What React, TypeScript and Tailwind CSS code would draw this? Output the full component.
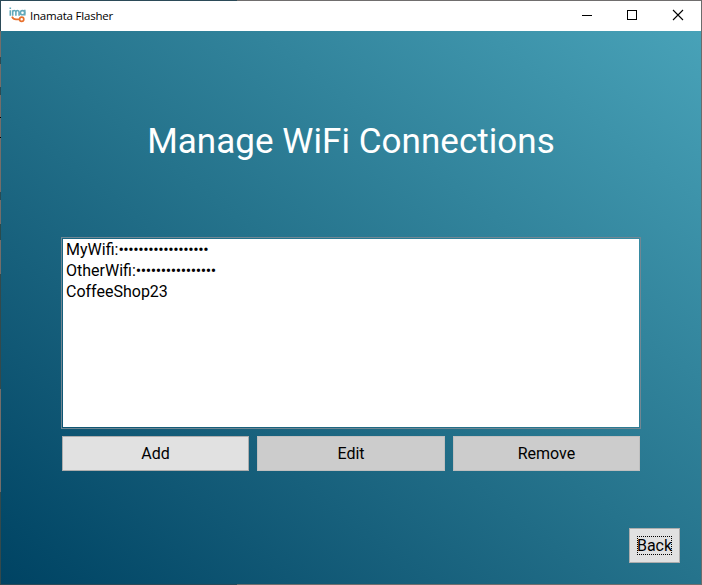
import React from "react";

const networks = [
  { name: "MyWifi:", mask: "••••••••••••••••••" },
  { name: "OtherWifi:", mask: "••••••••••••••••" },
  { name: "CoffeeShop23", mask: "" },
];

const leftEdge: [number, string][] = [
  [57, "bg-[#756d69]"],
  [7, "bg-[#2b4a52]"],
  [23, "bg-[#756d69]"],
  [8, "bg-[#2b4a52]"],
  [22, "bg-[#756d69]"],
  [1, "bg-black"],
  [19, "bg-[#756d69]"],
  [1, "bg-black"],
  [54, "bg-[#756d69]"],
  [8, "bg-[#2b4a52]"],
  [24, "bg-[#756d69]"],
  [16, "bg-[#2b4a4c]"],
  [34, "bg-[#756d69]"],
  [115, "bg-[#34494b]"],
  [103, "bg-[#756d69]"],
  [93, "bg-[#34494b]"],
];

function Logo() {
  return (
    <svg width="18" height="18" viewBox="0 0 18 18" fill="none" className="shrink-0">
      <g stroke="#62a9bb" strokeWidth="1.6">
        <path d="M1.3 3.2V8.8M1.3 .5v1.5" />
        <path d="M3.7 8.8V3.2M3.7 5Q3.9 3.5 5.3 3.5Q6.9 3.5 6.9 5.2V8.8M6.9 5.2Q7 3.5 8.5 3.5Q10.1 3.5 10.1 5.2V8.8" />
        <circle cx="13.5" cy="5.7" r="2.1" />
        <path d="M15.8 2.8V8.6" />
      </g>
      <path d="M3 9.6Q4.2 12.3 7 12.4H10.5" stroke="#e8702c" strokeWidth="1.7" />
      <circle cx="12.7" cy="12.2" r="2.1" stroke="#e8702c" strokeWidth="1.7" />
    </svg>
  );
}

function TitleBar() {
  return (
    <header className="flex h-[30px] items-center bg-white pl-2 text-black">
      <Logo />
      <span className="ml-[3px] w-[84px] whitespace-nowrap font-['Open_Sans',sans-serif] text-[11.5px] leading-4 tracking-[-0.2px]">
        Inamata Flasher
      </span>
      <svg width="138" height="30" viewBox="0 0 138 30" fill="none" stroke="#000" className="ml-auto">
        <path d="M19 14.5h10" />
        <rect x="64.5" y="9.5" width="9" height="9" />
        <path d="M110 9l10 10M120 9l-10 10" strokeWidth="1.1" />
      </svg>
    </header>
  );
}

function ActionButton({ label, enabled = false }: { label: string; enabled?: boolean }) {
  return (
    <button
      disabled={!enabled}
      className={`h-[35px] border text-black ${
        enabled ? "border-[#adadad] bg-[#e1e1e1]" : "border-[#bfbfbf] bg-[#cccccc]"
      }`}
    >
      {label}
    </button>
  );
}

function HorizontalEdge() {
  return (
    <div className="flex h-px shrink-0">
      <div className="w-[236px] bg-[#2b4a58]" />
      <div className="flex-1 bg-[#706e6e]" />
    </div>
  );
}

export default function App() {
  return (
    <div className="flex h-[585px] w-[702px] overflow-hidden font-[Roboto,sans-serif] text-base leading-[21px]">
      <div className="flex w-px shrink-0 flex-col">
        {leftEdge.map(([height, color], i) => (
          <div key={i} className={`shrink-0 ${i === 0 ? "bg-linear-to-b from-[#2b4a58] from-55% to-[#756d69] to-55%" : color}`} style={{ height }} />
        ))}
      </div>
      <div className="flex flex-1 flex-col">
        <HorizontalEdge />
        <TitleBar />
        <main className="flex flex-1 flex-col bg-linear-to-tr from-[#004363] via-[#25738c] to-[#48a2b8] px-[60px]">
          <h1 className="mt-[87px] h-12 whitespace-nowrap text-center text-[35px] leading-[48px] tracking-[0.05px] text-white">
            Manage WiFi Connections
          </h1>
          <ul className="mt-[71px] h-[192px] border border-[#718793] p-px">
            <li className="h-full bg-white pl-[3px] text-black">
              {networks.map(({ name, mask }) => (
                <div key={name} className="h-[21px] whitespace-nowrap">
                  {name}
                  <span className="tracking-[-0.4px]">{mask}</span>
                </div>
              ))}
            </li>
          </ul>
          <div className="mx-px mt-[7px] grid grid-cols-[187px_188px_187px] gap-2">
            <ActionButton label="Add" enabled />
            <ActionButton label="Edit" />
            <ActionButton label="Remove" />
          </div>
          <button className="-mr-[39px] mt-[57px] flex h-[35px] w-[51px] items-center justify-center self-end border border-[#adadad] bg-[#e1e1e1] text-black">
            <span className="flex h-[19px] w-[35px] items-center justify-center border border-dotted border-black">
              Back
            </span>
          </button>
        </main>
        <HorizontalEdge />
      </div>
      <div className="w-px shrink-0 bg-[#6b6b6b]" />
    </div>
  );
}
